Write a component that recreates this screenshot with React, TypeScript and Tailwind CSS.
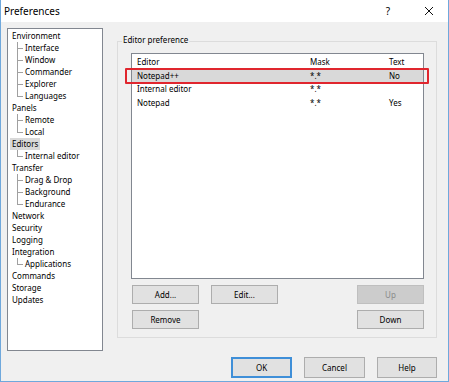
import React from "react";

type TreeNode = { label: string; children?: string[]; selected?: boolean };

const tree: TreeNode[] = [
  {
    label: "Environment",
    children: ["Interface", "Window", "Commander", "Explorer", "Languages"],
  },
  { label: "Panels", children: ["Remote", "Local"] },
  { label: "Editors", children: ["Internal editor"], selected: true },
  { label: "Transfer", children: ["Drag & Drop", "Background", "Endurance"] },
  { label: "Network" },
  { label: "Security" },
  { label: "Logging" },
  { label: "Integration", children: ["Applications"] },
  { label: "Commands" },
  { label: "Storage" },
  { label: "Updates" },
];

const editors = [
  { name: "Notepad++", mask: "*.*", text: "No", selected: true },
  { name: "Internal editor", mask: "*.*", text: "" },
  { name: "Notepad", mask: "*.*", text: "Yes" },
];

function Button({
  label,
  disabled,
  primary,
  className = "",
}: {
  label: string;
  disabled?: boolean;
  primary?: boolean;
  className?: string;
}) {
  return (
    <div
      className={
        "flex items-center justify-center " +
        (disabled
          ? "bg-[#cccccc] border border-[#bfbfbf] text-[#8a8a8a] "
          : primary
            ? "bg-[#e1e1e1] border-2 border-[#3f8fd8] text-black "
            : "bg-[#e1e1e1] border border-[#adadad] text-black ") +
        className
      }
    >
      {label}
    </div>
  );
}

function TreeChild({ label, last }: { label: string; last: boolean }) {
  return (
    <div className="flex h-[12px] items-center">
      <div className="relative w-[8px] h-full ml-[5px]">
        {/* connector */}
        <div
          className={
            "absolute left-0 top-0 w-px bg-[#a0a0a0] " +
            (last ? "h-[6px]" : "h-full")
          }
        />
        <div className="absolute left-0 top-[6px] h-px w-[6px] bg-[#a0a0a0]" />
      </div>
      <span className="leading-[12px]">{label}</span>
    </div>
  );
}

export default function App() {
  return (
    <div
      className="w-[449px] h-[382px] flex flex-col bg-[#f0f0f0] border-x border-b border-[#6fa8dc] text-black text-[8px] overflow-hidden"
      style={{ fontFamily: '"Noto Sans", "Open Sans", sans-serif' }}
    >
      {/* Title bar */}
      <div className="h-[22px] shrink-0 bg-white flex items-center pl-[3px] pr-[14px]">
        <span className="text-[10px]">Preferences</span>
        <span className="ml-auto text-[10px] mr-[34px]">?</span>
        <svg width="10" height="10" viewBox="0 0 10 10">
          <path d="M1 1 L9 9 M9 1 L1 9" stroke="#111" strokeWidth="1" />
        </svg>
      </div>

      {/* Body */}
      <div className="flex pt-[6px] pl-[6px] h-[329px] shrink-0">
        {/* Tree */}
        <div className="w-[96px] h-[323px] bg-white border border-[#828790] pt-[1px] pl-[4px]">
          {tree.map((node) => (
            <div key={node.label}>
              <div className="flex h-[12px] items-center">
                <span
                  className={
                    "leading-[12px] " +
                    (node.selected ? "bg-[#d9d9d9] -ml-[2px] px-[2px]" : "")
                  }
                >
                  {node.label}
                </span>
              </div>
              {node.children?.map((c, i) => (
                <TreeChild
                  key={c}
                  label={c}
                  last={i === node.children!.length - 1}
                />
              ))}
            </div>
          ))}
        </div>

        {/* Right side */}
        <div className="ml-[14px] w-[320px] pt-[13px]">
          <div className="relative w-[320px] h-[297px] border border-[#dcdcdc] pt-[11px] pl-[13px]">
            <span className="absolute left-[4px] -top-[8px] px-[1px] bg-[#f0f0f0] leading-[12px]">
              Editor preference
            </span>

            {/* List view */}
            <div className="relative w-[293px] h-[226px] bg-white border border-[#828790]">
              <div className="flex h-[15px] items-center">
                <div className="w-[172px] pl-[5px]">Editor</div>
                <div className="w-[79px] pl-[6px]">Mask</div>
                <div className="pl-[6px]">Text</div>
              </div>
              {editors.map((e) => (
                <div
                  key={e.name}
                  className={
                    "flex h-[13.5px] items-center " +
                    (e.selected ? "bg-[#d9d9d9]" : "")
                  }
                >
                  <div className="w-[172px] pl-[5px]">{e.name}</div>
                  <div className="w-[79px] pl-[6px]">{e.mask}</div>
                  <div className="pl-[6px]">{e.text}</div>
                </div>
              ))}
              {/* annotation box */}
              <div className="absolute -left-[7px] top-[14px] w-[304px] h-[16px] border-2 border-[#e0262e] rounded-[1px]" />
            </div>

            {/* List buttons */}
            <div className="flex mt-[6px] pl-[1px] w-[293px]">
              <Button label="Add..." className="w-[67px] h-[19px]" />
              <Button label="Edit..." className="w-[67px] h-[19px] ml-[12px]" />
              <Button label="Up" disabled className="w-[67px] h-[19px] ml-auto" />
            </div>
            <div className="flex mt-[6px] pl-[1px] w-[293px]">
              <Button label="Remove" className="w-[67px] h-[19px]" />
              <Button label="Down" className="w-[67px] h-[19px] ml-auto" />
            </div>
          </div>
        </div>
      </div>

      {/* Dialog buttons */}
      <div className="flex justify-end gap-[12px] pr-[11px] mt-[6px]">
        <Button label="OK" primary className="w-[61px] h-[21px]" />
        <Button label="Cancel" className="w-[61px] h-[21px]" />
        <Button label="Help" className="w-[60px] h-[21px]" />
      </div>
    </div>
  );
}
